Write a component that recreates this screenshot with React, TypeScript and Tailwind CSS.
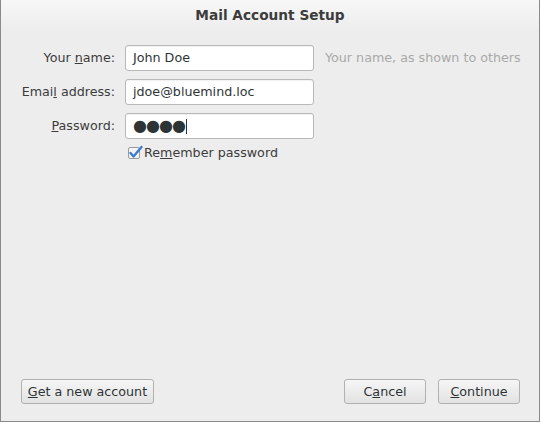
export default function App() {
  const field =
    "h-[26px] w-[189px] rounded-[3px] border border-[#b8b8b8] bg-white px-[7px] flex items-center text-[#2e3436] shadow-[inset_0_1px_1px_rgba(0,0,0,0.06)]"
  const btn =
    "h-[25px] rounded-[3px] border border-[#b1b1b1] bg-gradient-to-b from-[#f6f6f6] to-[#e2e2e2] text-[#2e3436] flex items-center justify-center"

  return (
    <div className="w-[541px] h-[423px] bg-white font-['DejaVu_Sans',sans-serif] text-[12.7px]">
      <div className="w-[540px] h-[422px] border-l border-r border-b border-[#8a8a8a] bg-[#ededed] flex flex-col">
        <div className="h-[30px] flex items-center justify-center bg-gradient-to-b from-[#f7f7f7] to-[#ededed] font-bold text-[13.7px] text-[#3c3c3c]">
          Mail Account Setup
        </div>

        <div className="flex-1 flex flex-col pt-[15px]">
          <div className="grid grid-cols-[114px_189px_auto] gap-x-[10px] gap-y-[8px] items-center">
            <div className="text-right text-[#3c3c3c]">
              Your <span className="underline">n</span>ame:
            </div>
            <div className={field}>John Doe</div>
            <div className="text-[#a9a9a9] pl-[1px]">Your name, as shown to others</div>

            <div className="text-right text-[#3c3c3c]">
              Emai<span className="underline">l</span> address:
            </div>
            <div className={field}>jdoe@bluemind.loc</div>
            <div />

            <div className="text-right text-[#3c3c3c]">
              <span className="underline">P</span>assword:
            </div>
            <div className={field}>
              <span className="tracking-[-1px] text-[16px] leading-none">●●●●</span>
              <span className="ml-[1px] w-px h-[15px] bg-[#2e3436]" />
            </div>
            <div />
          </div>

          <div className="flex items-center ml-[127px] mt-[4px] text-[#3c3c3c]">
            <svg width="16" height="16" viewBox="0 0 16 16">
              <rect x="0.5" y="2.5" width="11" height="11" rx="1.5" fill="#f4f4f4" stroke="#9a9a9a" />
              <path d="M2.5 8 L5.5 11.5 L13.5 2" fill="none" stroke="#3a7bd5" strokeWidth="2.4" strokeLinecap="round" strokeLinejoin="round" />
            </svg>
            <span>
              Re<span className="underline">m</span>ember password
            </span>
          </div>

          <div className="flex-1" />

          <div className="flex items-center pl-[20px] pr-[19px] pb-[17px]">
            <button className={btn + " w-[133px]"}>
              <span>
                <span className="underline">G</span>et a new account
              </span>
            </button>
            <div className="flex-1" />
            <button className={btn + " w-[82px]"}>
              <span>
                C<span className="underline">a</span>ncel
              </span>
            </button>
            <button className={btn + " w-[82px] ml-[12px]"}>
              <span>
                <span className="underline">C</span>ontinue
              </span>
            </button>
          </div>
        </div>
      </div>
    </div>
  )
}
